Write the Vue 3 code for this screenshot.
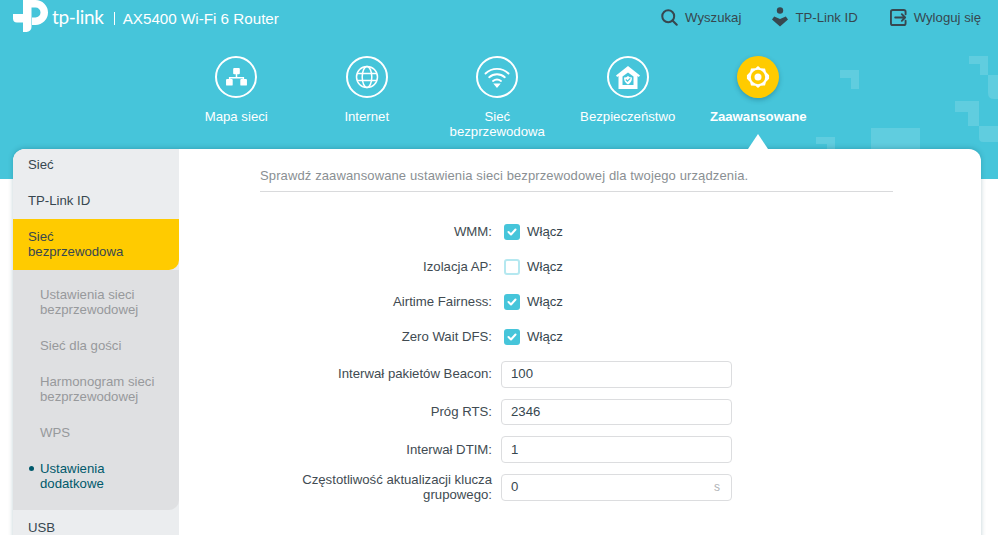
<script setup>
const navItems = [
  { id: 'map', label: 'Mapa sieci' },
  { id: 'internet', label: 'Internet' },
  { id: 'wifi', label: 'Sieć bezprzewodowa' },
  { id: 'security', label: 'Bezpieczeństwo' },
  { id: 'advanced', label: 'Zaawansowane', active: true }
]

const subMenu = [
  { label: 'Ustawienia sieci bezprzewodowej' },
  { label: 'Sieć dla gości' },
  { label: 'Harmonogram sieci bezprzewodowej' },
  { label: 'WPS' },
  { label: 'Ustawienia dodatkowe', active: true }
]

const checks = [
  { label: 'WMM:', checked: true },
  { label: 'Izolacja AP:', checked: false },
  { label: 'Airtime Fairness:', checked: true },
  { label: 'Zero Wait DFS:', checked: true }
]

const inputs = [
  { label: 'Interwał pakietów Beacon:', value: '100' },
  { label: 'Próg RTS:', value: '2346' },
  { label: 'Interwał DTIM:', value: '1' },
  { label: 'Częstotliwość aktualizacji klucza grupowego:', value: '0', unit: 's' }
]
</script>

<template>
  <div class="page">
    <header class="header">
      <svg class="deco" width="998" height="179" viewBox="0 0 998 179">
        <g fill="#fff" fill-opacity=".14">
          <path d="M840 70h19v19h-8v-11h-11z" />
          <path d="M969 56h19v19h-8v-11h-11z" />
          <path d="M988 75h10v24h-4q-6 0-6-6z" />
          <path d="M955 101h24v25h-11v-14h-13z" />
          <path d="M979 126h19v16h-15q-4 0-4-4z" />
          <path d="M871 128h49v21h-49z" />
          <path d="M816 137h19v12h-8v-5h-11z" />
        </g>
      </svg>

      <div class="topbar">
        <div class="brand">
          <svg class="logo" width="35" height="32" viewBox="0 0 35 32">
            <path fill="#fff" d="M10 0h12.500a12.500 12.500 0 0 1 0 25H19v-7.500h3.500a5 5 0 0 0 0-10H18.500V27a5 5 0 0 1-5 5H10V22.500H4a4 4 0 0 1-4-4V14h10V0z" />
          </svg>
          <span class="wordmark">tp-link</span>
          <span class="model">AX5400 Wi-Fi 6 Router</span>
        </div>
        <nav class="actions">
          <a class="action search">
            <svg width="17" height="17" viewBox="0 0 20 20" fill="none" stroke="#37474f" stroke-width="2.400" stroke-linecap="round">
              <circle cx="8.500" cy="8.500" r="7" />
              <path d="M13.500 13.500 18.500 18.500" />
            </svg>
            Wyszukaj
          </a>
          <a class="action">
            <svg width="16" height="20" viewBox="0 0 16 20" fill="#37474f">
              <circle cx="8" cy="3.500" r="3.200" />
              <path d="M0 12.500 2.200 9.500 8 12l5.800-2.500 2.200 3L8 19.500z" />
            </svg>
            TP-Link ID
          </a>
          <a class="action">
            <svg width="17" height="17" viewBox="0 0 18 18" fill="none" stroke="#37474f" stroke-width="2" stroke-linecap="round" stroke-linejoin="round">
              <path d="M16.500 5.500V3a2 2 0 0 0-2-2H3a2 2 0 0 0-2 2v12a2 2 0 0 0 2 2h11.500a2 2 0 0 0 2-2v-2.500" />
              <path d="M5.500 9H16M12.500 5.500 16 9l-3.500 3.500" />
            </svg>
            Wyloguj się
          </a>
        </nav>
      </div>

      <nav class="mainnav">
        <a v-for="item in navItems" :key="item.id" class="navitem" :class="{ active: item.active }">
          <span class="circle">
            <svg v-if="item.id === 'map'" width="23" height="19" viewBox="0 0 24 20" fill="#fff">
              <rect x="8.500" y="0" width="7" height="6.500" rx="1" />
              <path d="M11.200 6h1.600v3.500H20V12h-1.600v-1H5.600v1H4V9.500h7.200z" />
              <rect x="1" y="11.500" width="7" height="7" rx="1" />
              <rect x="16" y="11.500" width="7" height="7" rx="1" />
            </svg>
            <svg v-else-if="item.id === 'internet'" width="24" height="24" viewBox="0 0 24 24" fill="none" stroke="#fff" stroke-width="1.500">
              <circle cx="12" cy="12" r="10.500" />
              <ellipse cx="12" cy="12" rx="4.800" ry="10.500" />
              <path d="M2 8.500h20M2 15.500h20" />
            </svg>
            <svg v-else-if="item.id === 'wifi'" width="26" height="22" viewBox="0 0 26 22" fill="none" stroke="#fff" stroke-width="1.900" stroke-linecap="round">
              <path d="M1.500 7.500C8 1.300 18 1.300 24.500 7.500" />
              <path d="M5.200 11.200c4.500-4 11.100-4 15.600 0" />
              <path d="M9 15c2.400-1.900 5.600-1.900 8 0" />
              <path d="M11.300 18.500h3.400L13 20.500z" fill="#fff" />
            </svg>
            <svg v-else-if="item.id === 'security'" width="24" height="23" viewBox="0 0 24 23">
              <path fill="#fff" d="M12 0 24 9.500l-1.200 1.500-1.300-1V23h-19V10L1.200 11 0 9.500zM12 6.500 6.500 10.500V19h11v-8.500z" />
              <path fill="#fff" d="M8 11.500q2.500 0 4-1.500 1.500 1.500 4 1.500 0 5-4 7-4-2-4-7z" />
              <path fill="none" stroke="#46c5da" stroke-width="1.200" d="m9.800 13.500 1.700 1.700 2.800-2.800" />
            </svg>
            <svg v-else width="24" height="24" viewBox="0 0 26 26">
              <path fill="#fff" d="M13 1 15.800 3.600 20.600 3.800 21.600 7.600 25 11.200 25 14.800 21.600 18.400 20.600 22.200 15.800 22.400 13 25 10.200 22.400 5.400 22.200 4.400 18.400 1 14.800 1 11.200 4.400 7.600 5.400 3.800 10.200 3.600z" />
              <circle cx="13" cy="13" r="7.800" fill="#ffcb00" />
              <circle cx="13" cy="13" r="3.800" fill="#fff" />
            </svg>
          </span>
          <span class="navlabel">{{ item.label }}</span>
        </a>
      </nav>
    </header>

    <div class="card">
      <span class="pointer"></span>
      <aside class="sidebar">
        <a class="menuitem first">Sieć</a>
        <a class="menuitem">TP-Link ID</a>
        <a class="menuitem selected">Sieć<br />bezprzewodowa</a>
        <div class="submenu">
          <a v-for="sub in subMenu" :key="sub.label" class="subitem" :class="{ active: sub.active }">{{ sub.label }}</a>
        </div>
        <a class="menuitem usb">USB</a>
      </aside>

      <main class="content">
        <p class="intro">Sprawdź zaawansowane ustawienia sieci bezprzewodowej dla twojego urządzenia.</p>

        <div class="checks">
          <div v-for="row in checks" :key="row.label" class="row checkrow">
            <span class="label">{{ row.label }}</span>
            <span class="checkbox" :class="{ on: row.checked }">
              <svg v-if="row.checked" width="10" height="8" viewBox="0 0 10 8" fill="none" stroke="#fff" stroke-width="2" stroke-linecap="round" stroke-linejoin="round">
                <path d="m1.500 4 2.500 2.500 4.500-5" />
              </svg>
            </span>
            <span class="checktext">Włącz</span>
          </div>
        </div>

        <div class="inputs">
          <div v-for="row in inputs" :key="row.label" class="row inputrow">
            <span class="label">{{ row.label }}</span>
            <div class="field">
              <span>{{ row.value }}</span>
              <span v-if="row.unit" class="unit">{{ row.unit }}</span>
            </div>
          </div>
        </div>
      </main>
    </div>
  </div>
</template>

<style>
html, body {
  margin: 0;
  background: #fff;
  overflow: hidden;
}
</style>

<style scoped>
.page {
  width: 998px;
  height: 535px;
  overflow: hidden;
  font-family: "Liberation Sans", Arial, sans-serif;
  font-size: 13.200px;
  color: #37474f;
}

a {
  color: inherit;
  text-decoration: none;
}

.header {
  position: relative;
  height: 179px;
  background: #46c5da;
  color: #fff;
}

.deco {
  position: absolute;
  top: 0;
  left: 0;
}

.topbar {
  position: relative;
  display: flex;
  justify-content: space-between;
  align-items: flex-start;
  height: 52px;
  padding-left: 13px;
  padding-right: 17px;
}

.brand {
  display: flex;
  align-items: center;
  height: 32px;
}

.wordmark {
  margin-left: 4px;
  margin-top: 1px;
  font-family: Lato, "Liberation Sans", sans-serif;
  font-size: 19px;
  letter-spacing: -.3px;
  line-height: 1;
}

.model {
  position: relative;
  margin-left: 10px;
  margin-top: 6px;
  padding-left: 9px;
  font-size: 15.200px;
  line-height: 16px;
}

.model::before {
  content: "";
  position: absolute;
  left: 0;
  top: 1px;
  width: 1px;
  height: 13px;
  background: #fff;
}

.actions {
  display: flex;
  gap: 32px;
  padding-top: 7px;
}

.action {
  display: flex;
  align-items: center;
  gap: 7px;
  height: 20px;
  color: #37474f;
}

.action.search {
  margin-right: -1px;
}

.mainnav {
  position: relative;
  display: flex;
  padding-left: 171px;
  padding-top: 4px;
}

.navitem {
  display: flex;
  flex-direction: column;
  align-items: center;
  width: 130.500px;
  text-align: center;
  line-height: 15px;
}

.circle {
  display: flex;
  align-items: center;
  justify-content: center;
  box-sizing: border-box;
  width: 42px;
  height: 42px;
  border: 2px solid #fff;
  border-radius: 50%;
}

.navlabel {
  margin-top: 11px;
  width: 118px;
}

.navitem.active .circle {
  background: #ffcb00;
  border: 0;
  box-shadow: 0 2px 5px rgba(0, 60, 80, .3);
}

.navitem.active .navlabel {
  width: 130px;
  font-weight: 700;
}

.card {
  position: relative;
  display: flex;
  width: 968px;
  height: 420px;
  margin-top: -30px;
  margin-left: 13px;
  background: #fff;
  border-radius: 12px 12px 0 0;
  box-shadow: 0 -1px 5px rgba(0, 70, 90, .25);
}

.pointer {
  position: absolute;
  top: -15px;
  left: 735px;
  width: 0;
  height: 0;
  border-left: 10px solid transparent;
  border-right: 10px solid transparent;
  border-bottom: 15px solid #fff;
}

.sidebar {
  flex: none;
  width: 166px;
  height: 420px;
  background: #ebedef;
  border-radius: 12px 0 0 0;
  line-height: 15px;
  overflow: hidden;
}

.menuitem {
  display: block;
  padding: 10px 15px;
  box-sizing: border-box;
}

.menuitem.first {
  padding-top: 8px;
  height: 34px;
}

.menuitem + .menuitem {
  height: 36px;
}

.menuitem.selected {
  height: 51px;
  padding-top: 10px;
  background: #ffcb00;
  border-radius: 0 0 10px 0;
}

.submenu {
  height: 240px;
  padding: 17px 15px 0 27px;
  box-sizing: border-box;
  background: #dfe0e2;
  border-radius: 0 0 10px 0;
  color: #97999c;
}

.subitem {
  position: relative;
  display: block;
  margin-bottom: 21px;
}

.subitem.active {
  color: #00596b;
}

.subitem.active::before {
  content: "";
  position: absolute;
  left: -11px;
  top: 5px;
  width: 5px;
  height: 5px;
  border-radius: 50%;
  background: #00596b;
}

.menuitem.usb {
  height: 30px;
  padding-top: 10px;
}

.content {
  flex: 1;
  padding: 0 88px 0 81px;
}

.intro {
  margin: 0;
  padding: 19px 0 7px;
  line-height: 16px;
  font-size: 13px;
  letter-spacing: .12px;
  color: #8a8f93;
  border-bottom: 1px solid #d9dadc;
}

.checks {
  display: flex;
  flex-direction: column;
  gap: 15px;
  padding-top: 30px;
}

.row {
  display: flex;
  align-items: center;
  width: 472px;
}

.checkrow {
  height: 20px;
}

.checkrow .label,
.checktext {
  margin-bottom: 1px;
}

.inputrow {
  height: 26.700px;
}

.inputrow .label {
  margin-bottom: 1px;
}

.label {
  flex: none;
  width: 232px;
  text-align: right;
  line-height: 15px;
  color: #414b52;
}

.checkbox {
  flex: none;
  display: flex;
  align-items: center;
  justify-content: center;
  box-sizing: border-box;
  width: 16px;
  height: 16px;
  margin-left: 12px;
  border: 2px solid #b5e8f0;
  border-radius: 3px;
}

.checkbox.on {
  background: #46c5da;
  border: 0;
}

.checktext {
  margin-left: 7px;
}

.inputs {
  display: flex;
  flex-direction: column;
  gap: 11px;
  padding-top: 14px;
}

.field {
  flex: none;
  display: flex;
  justify-content: space-between;
  align-items: center;
  box-sizing: border-box;
  width: 231px;
  height: 26.700px;
  margin-left: 9px;
  padding: 0 11px 1px 9px;
  border: 1px solid #dcdddf;
  border-radius: 4px;
  color: #37474f;
}

.unit {
  font-size: 12px;
  color: #b0b3b6;
}
</style>
